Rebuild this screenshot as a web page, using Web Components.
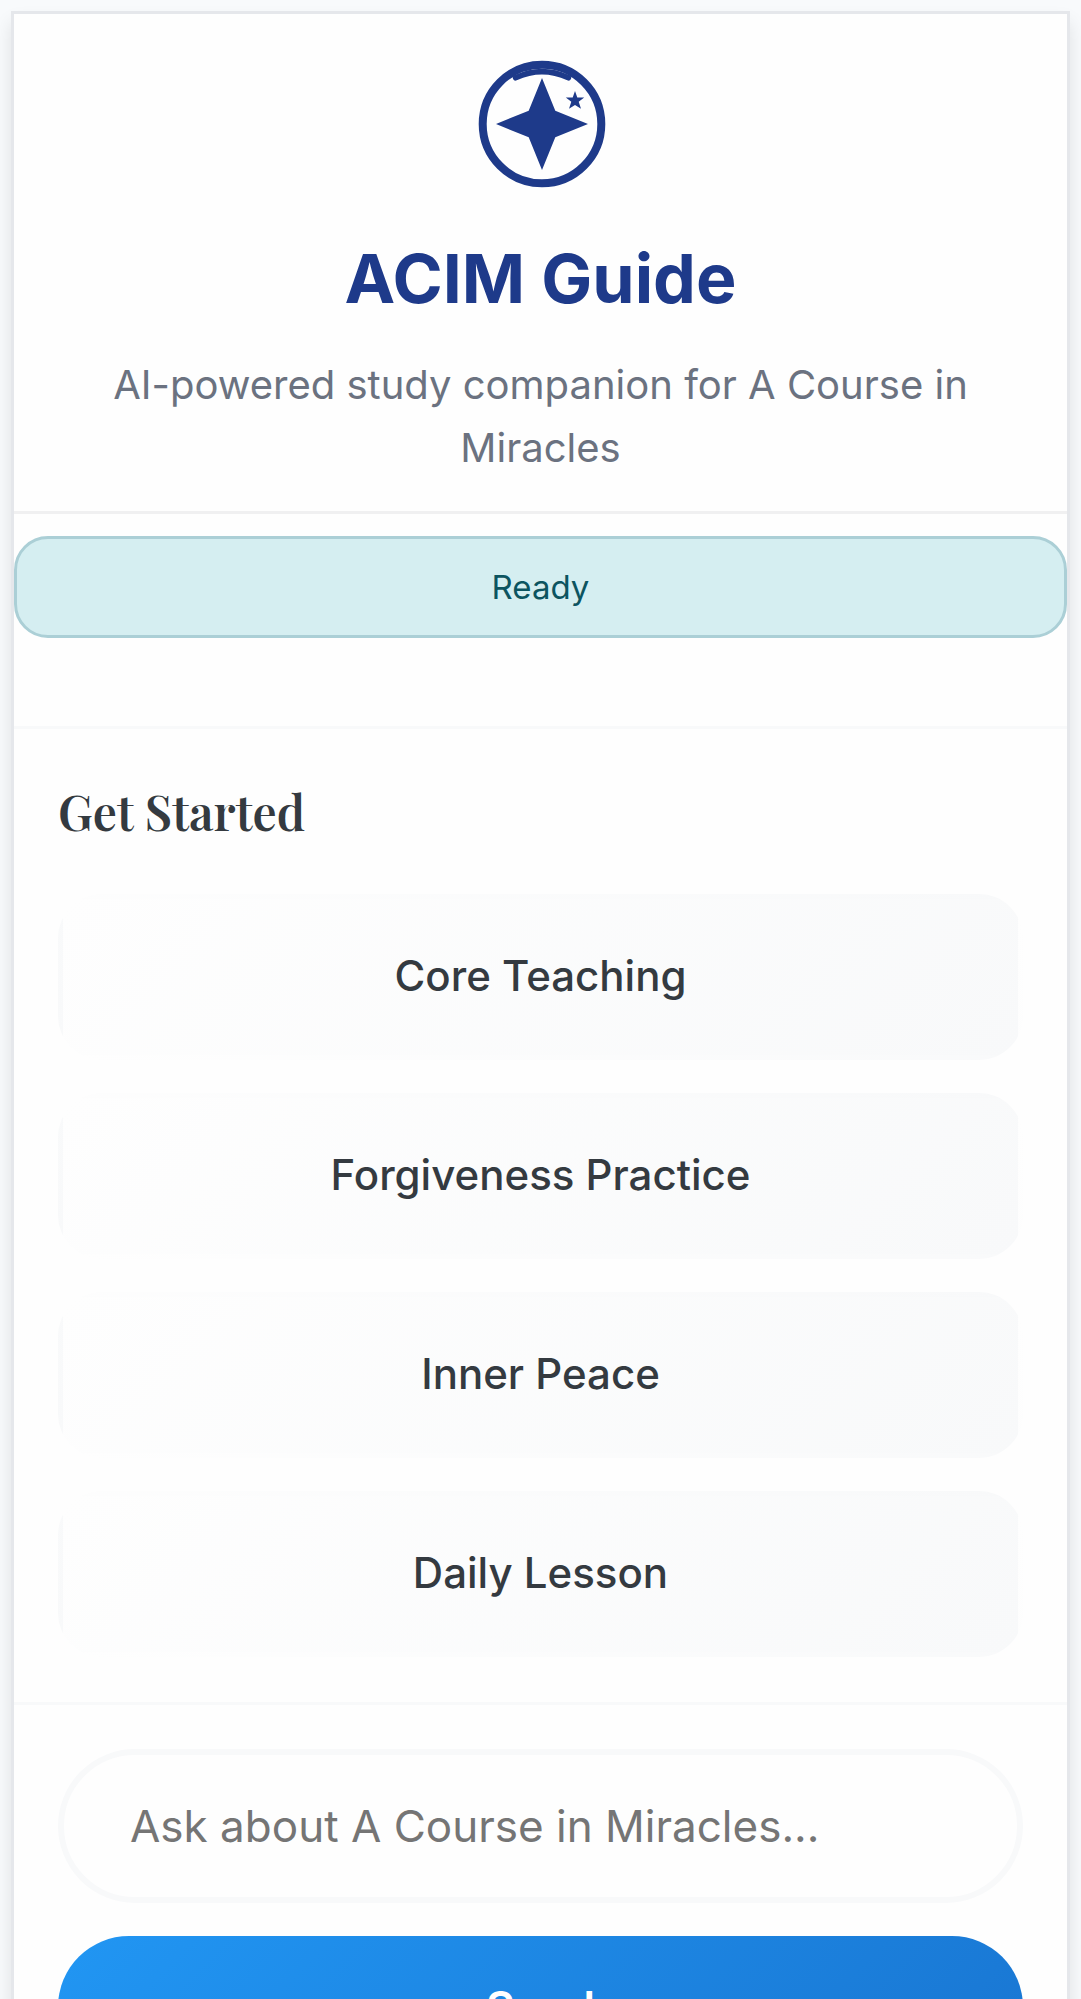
<!DOCTYPE html>
<html lang="en">
<head>
<meta charset="utf-8">
<meta name="viewport" content="width=device-width, initial-scale=1">
<title>ACIM Guide</title>
<style>
  html, body { margin: 0; height: 100%; }
  body {
    box-sizing: border-box;
    padding: 11px;
    overflow-y: auto;
    scrollbar-width: none;
    background: #f8fafc;
    color: #343a40;
    font-family: Inter, "Liberation Sans", sans-serif;
  }
</style>
</head>
<body>
<guide-shell>
  <guide-header heading="ACIM Guide">AI-powered study companion for A Course in Miracles</guide-header>
  <guide-status>Ready</guide-status>
  <guide-topics heading="Get Started">
    <topic-button>Core Teaching</topic-button>
    <topic-button>Forgiveness Practice</topic-button>
    <topic-button>Inner Peace</topic-button>
    <topic-button>Daily Lesson</topic-button>
  </guide-topics>
  <guide-composer placeholder="Ask about A Course in Miracles..." action="Send"></guide-composer>
</guide-shell>

<script>
  class GuideElement extends HTMLElement {
    constructor() {
      super();
      this.attachShadow({ mode: "open" });
    }
    connectedCallback() {
      this.shadowRoot.innerHTML =
        "<style>*{box-sizing:border-box}:host{display:block;box-sizing:border-box}</style>" + this.render();
    }
  }

  customElements.define("guide-shell", class extends GuideElement {
    render() {
      return `
        <style>
          main {
            background: #fefefe;
            border: 3px solid #e5e7eb;
            box-shadow: 0 11px 17px rgba(0, 0, 0, .1);
          }
        </style>
        <main><slot></slot></main>`;
    }
  });

  customElements.define("guide-logo", class extends GuideElement {
    render() {
      return `
        <style>
          :host { width: 134px; height: 134px; color: #1e3a8a; }
          svg { display: block; width: 100%; height: 100%; }
        </style>
        <svg viewBox="-68 -67 134 134" fill="currentColor" aria-hidden="true">
          <circle r="59.3" fill="none" stroke="currentColor" stroke-width="8"/>
          <path d="M0-46 13.3-13.3 46 0 13.3 13.3 0 46-13.3 13.3-46 0-13.3-13.3Z"/>
          <path d="M-26.4-46.2Q0-58.6 26.4-46.2" fill="none" stroke="currentColor" stroke-width="5.6" stroke-linecap="round"/>
          <path d="M33-33 35.3-26.4H42.2L36.7-22.2 39-15.3 33-19 27-15.3 29.3-22.2 23.8-26.4H30.7Z"/>
        </svg>`;
    }
  });

  customElements.define("guide-header", class extends GuideElement {
    render() {
      return `
        <style>
          header {
            display: flex; flex-direction: column; align-items: center;
            padding: 43px 44px 32px;
            border-bottom: 3px solid #f0f0f1;
            text-align: center;
          }
          h1 { margin: 45px 0 0; font-size: 68px; line-height: 84px; font-weight: 700; color: #1e3a8a; }
          p { margin: 33px 0 0; font-size: 40px; line-height: 63px; color: #6b7280; }
        </style>
        <header>
          <guide-logo></guide-logo>
          <h1>${this.getAttribute("heading")}</h1>
          <p><slot></slot></p>
        </header>`;
    }
  });

  customElements.define("guide-status", class extends GuideElement {
    render() {
      return `
        <style>
          :host { padding: 22px 0 88px; }
          div {
            padding: 22px;
            border: 3px solid #abcfd6;
            border-radius: 34px;
            background: #d5eef1;
            color: #0c5460;
            text-align: center;
            font-size: 33px; line-height: 52px;
          }
        </style>
        <div role="status"><slot></slot></div>`;
    }
  });

  customElements.define("guide-topics", class extends GuideElement {
    render() {
      return `
        <style>
          section {
            display: flex; flex-direction: column; gap: 33px;
            padding: 44px 44px 45px;
            border: solid #f8f9fa; border-width: 3px 0;
          }
          h2 {
            margin: 0 0 11px;
            font-family: "Playfair Display", "Liberation Serif", serif;
            font-size: 48px; line-height: 77px; font-weight: 600;
          }
        </style>
        <section>
          <h2>${this.getAttribute("heading")}</h2>
          <slot></slot>
        </section>`;
    }
  });

  customElements.define("topic-button", class extends GuideElement {
    render() {
      return `
        <style>
          button {
            display: block; width: 100%;
            padding: 43px 44px 45px;
            border: 5px solid transparent;
            border-radius: 44px;
            background: linear-gradient(135deg, #fefefe, #f8f9fa);
            color: #343a40;
            font: 500 42px/68px Inter, "Liberation Sans", sans-serif;
          }
        </style>
        <button type="button"><slot></slot></button>`;
    }
  });

  customElements.define("guide-composer", class extends GuideElement {
    render() {
      return `
        <style>
          form { display: flex; flex-direction: column; gap: 33px; padding: 44px; }
          input, button {
            display: block; width: 100%; margin: 0;
            border-radius: 77px;
            font-family: Inter, "Liberation Sans", sans-serif;
          }
          input {
            padding: 44px 66px;
            border: 6px solid #f8f9fa;
            background: #fefefe;
            color: #343a40;
            font-size: 44px; line-height: 54px;
            outline: 0;
          }
          input::placeholder { color: #757575; opacity: 1; }
          button {
            padding: 44px;
            border: 0;
            background: linear-gradient(135deg, #2196f3, #1976d2);
            color: #fff;
            font-size: 44px; line-height: 54px; font-weight: 600;
          }
        </style>
        <form>
          <input type="text" aria-label="Question" placeholder="${this.getAttribute("placeholder")}">
          <button type="button">${this.getAttribute("action")}</button>
        </form>`;
    }
  });
</script>
</body>
</html>
